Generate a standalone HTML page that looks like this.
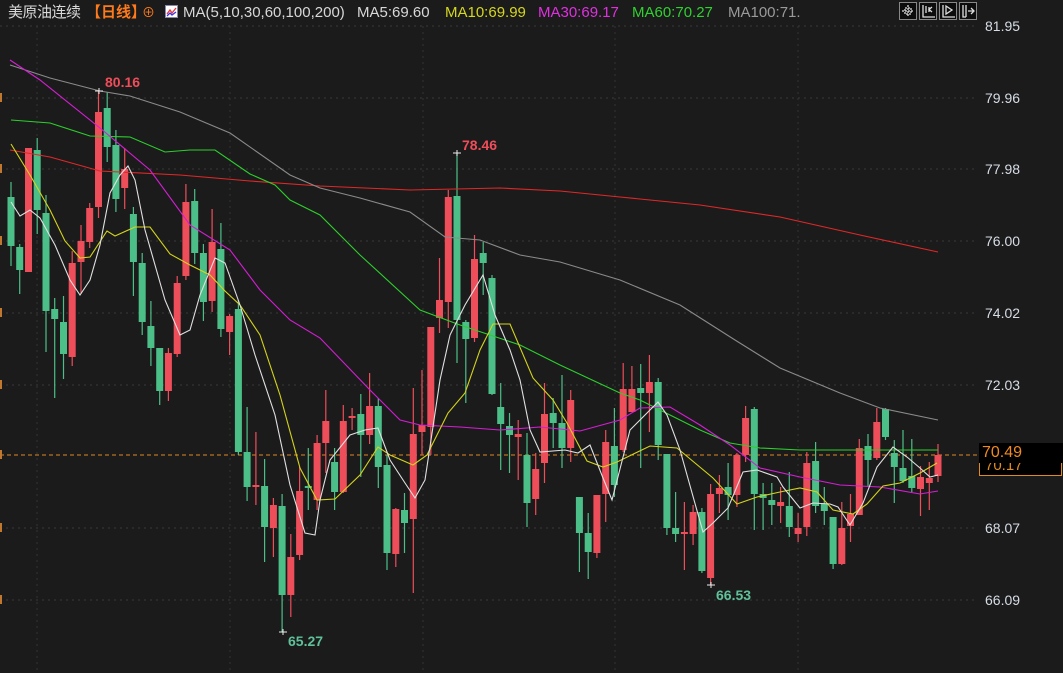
<!DOCTYPE html>
<html><head><meta charset="utf-8">
<style>
html,body{margin:0;padding:0;background:#1b1b1b;width:1063px;height:673px;overflow:hidden}
body{font-family:"Liberation Sans","Noto Sans CJK SC",sans-serif;position:relative}
.h{position:absolute;top:3px;font-size:15px;color:#d8d8d8;white-space:nowrap;line-height:20px}
.ax{position:absolute;left:985px;font-size:14px;color:#d6dde6}
.tb{position:absolute;top:2px;width:18px;height:18px;border:1px solid #888;background:#0c0c0c;box-sizing:border-box}
</style></head><body>
<svg id="c" width="1063" height="673" style="position:absolute;left:0;top:0"></svg>
<div class="h" style="left:8px;letter-spacing:-0.5px">美原油连续</div>
<div class="h" style="left:86px;color:#ff7a1a;font-weight:bold">【日线】</div>
<div class="h" style="left:142px;color:#ff7a1a;font-size:13px">⊕</div>
<div style="position:absolute;left:165px;top:5px;width:13px;height:13px;background:#fff;border:1px solid #88a;box-sizing:border-box"><svg width="11" height="11" style="display:block"><path d="M1 8 L4 4 L6 7 L10 2" stroke="#e33" fill="none" stroke-width="1.3"/><path d="M1 10 L4 7 L6 9 L10 6" stroke="#33e" fill="none" stroke-width="1.3"/></svg></div>
<div class="h" style="left:183px">MA(5,10,30,60,100,200)</div>
<div class="h" style="left:357px">MA5:69.60</div>
<div class="h" style="left:445px;color:#d6d61e">MA10:69.99</div>
<div class="h" style="left:538px;color:#e030e0">MA30:69.17</div>
<div class="h" style="left:632px;color:#30d030">MA60:70.27</div>
<div class="h" style="left:728px;color:#9a9a9a">MA100:71.</div>
<div class="tb" style="left:899px"></div><div class="tb" style="left:919px"></div><div class="tb" style="left:939px"></div><div class="tb" style="left:959px"></div>
<svg width="1063" height="25" style="position:absolute;left:0;top:0"><g stroke="#ddd" stroke-width="1.3" fill="none"><path d="M902 11h12M908 5v12M905 8h6v6h-6z" stroke-dasharray="2,1"/><path d="M923 5v12h12M926 6v7M929 7v5M932 7l-3 2.5 3 2.5"/><path d="M943 5v12h12M946 6l6 4-6 4z"/><path d="M963 5v12h3M966 5v12M968 11h5M971 8l3 3-3 3"/></g></svg>
<div class="ax" style="top:18px">81.95</div>
<div class="ax" style="top:90px">79.96</div>
<div class="ax" style="top:161px">77.98</div>
<div class="ax" style="top:233px">76.00</div>
<div class="ax" style="top:305px">74.02</div>
<div class="ax" style="top:377px">72.03</div>
<div class="ax" style="top:520px">68.07</div>
<div class="ax" style="top:592px">66.09</div>
<div style="position:absolute;left:979px;top:457px;width:83px;height:19px;border:1px solid #e08a20;box-sizing:border-box;background:#000;color:#e08a20;font-size:15px;line-height:15px;padding-left:5px;overflow:hidden">70.17</div>
<div style="position:absolute;left:979px;top:443px;width:84px;height:20px;background:#000;color:#f08a20;font-size:16px;line-height:20px;padding-left:3px;box-sizing:border-box">70.49</div>
<script>
var s=document.getElementById('c'),h='';
[26,98,169,241,313,385,528,600].forEach(function(y){h+='<line x1="0" x2="975" y1="'+y+'" y2="'+y+'" stroke="#3a3a3a" stroke-dasharray="2,4"/>';});
[37,230,423,615,798].forEach(function(x){h+='<line x1="'+x+'" x2="'+x+'" y1="26" y2="673" stroke="#333" stroke-dasharray="2,4"/>';});
h+='<line x1="0" x2="979" y1="455" y2="455" stroke="#e08a20" stroke-dasharray="4,3"/>';
[98,169,241,313,385,455,528,600].forEach(function(y){h+='<rect x="0" y="'+(y-5)+'" width="2" height="9" fill="#c07830"/>';});
var G='#4cbf88',R='#ee4d5a';
var A=[[197,246,182,266,G],[247,270,244,294,G],[148,272,148,272,R],[150,210,138,234,G],[213,311,195,352,G],[309,319,298,398,G],[322,354,296,379,G],[263,357,251,366,R],[241,262,225,294,R],[208,242,203,248,R],[112,207,91,218,R],[108,147,92,162,G],[145,199,130,212,G],[169,188,148,209,R],[214,262,207,296,G],[263,322,253,335,G],[326,348,301,366,G],[348,391,348,405,G],[353,391,348,401,R],[283,354,276,357,R],[202,276,184,280,R],[201,253,189,264,G],[253,302,244,321,G],[242,301,209,312,R],[249,329,223,337,G],[316,332,314,355,R],[309,452,300,455,G],[452,487,407,501,G],[485,487,432,505,R],[486,527,459,562,G],[505,528,498,557,R],[506,595,494,632,G],[557,595,534,617,R],[491,555,467,560,R],[486,488,448,510,G],[443,500,435,510,R],
[421,443,390,473,R],[462,492,448,510,G],[421,492,405,493,R],[416,418,408,430,R],[414,435,394,477,G],[406,435,373,444,R],[406,467,398,488,G],[465,553,455,570,G],[509,554,508,567,R],[510,523,493,553,G],[434,519,388,593,R],[425,432,370,455,R],[327,427,327,455,R],[300,318,258,333,R],[197,302,190,328,R],[196,320,153,363,G],[322,339,320,403,G],[259,338,235,342,R],[253,263,242,295,G],[278,394,275,395,G],[407,424,383,470,G],[426,435,413,473,G],[434,437,420,480,R],[455,503,433,527,G],[469,499,453,515,R],[414,463,383,483,R],[413,423,398,448,G],[423,448,375,468,G],[400,448,390,462,R],[497,533,497,572,G],[533,552,513,579,G],[495,553,495,558,R],[442,494,430,522,R],[446,485,408,497,G],
[389,450,363,452,R],[389,412,366,412,R],[388,393,364,468,G],[382,393,355,432,R],[382,445,378,460,G],[454,528,454,535,G],[528,534,492,542,G],[532,533,502,570,R],[512,534,505,545,R],[512,571,508,573,G],[494,578,484,585,R],[488,494,475,513,R],[487,495,463,520,G],[455,495,453,507,R],[418,455,406,462,R],[409,494,407,530,G],[494,498,483,530,G],[500,505,483,525,G],[502,506,487,523,R],[506,527,472,537,G],[528,534,513,542,R],[463,527,452,536,R],[461,506,442,513,G],[504,511,487,525,G],[517,564,517,569,G],[528,564,502,565,R],[514,526,494,542,R],[448,515,439,515,R],[446,460,434,487,G],[422,458,408,460,R],[409,437,408,440,G],[453,467,440,503,G],[468,481,430,483,G],[476,488,439,492,G],[477,489,466,516,R],[478,483,462,510,R],[455,476,444,482,R]];
var n=A.length,sp=(938-11)/(n-1);
A.forEach(function(c,i){var x=11+i*sp;
h+='<line x1="'+x.toFixed(1)+'" x2="'+x.toFixed(1)+'" y1="'+c[2]+'" y2="'+c[3]+'" stroke="'+c[4]+'" stroke-width="1.2"/>';
var bh=Math.max(c[1]-c[0],2);
h+='<rect x="'+(x-3.5).toFixed(1)+'" y="'+c[0]+'" width="7" height="'+bh+'" fill="'+c[4]+'"/>';});
function pl(p,col){h+='<polyline fill="none" stroke="'+col+'" stroke-width="1.1" points="'+p+'"/>';}
pl('10,150 50,157 100,171 180,175 250,181 320,186 410,190 500,188 560,191 620,197 700,205 780,217 860,235 938,252','#e02828');
pl('10,65 50,78 100,91 130,96 180,112 230,133 290,175 320,188 360,198 410,212 445,237 480,240 520,255 560,262 620,280 680,305 735,340 780,368 840,393 880,408 938,420','#8a8a8a');
pl('11,120 50,123 90,136 130,137 165,152 190,150 215,150 250,174 275,185 290,200 320,215 360,255 420,310 460,325 520,345 560,365 620,393 640,400 700,430 730,443 760,448 800,450 840,450 880,450 938,450','#2ccf2c');
pl('10,60 40,80 100,128 150,170 190,225 230,250 260,290 290,320 320,338 370,390 400,420 420,425 460,427 500,430 540,427 580,431 620,420 640,408 670,407 700,425 730,445 760,468 800,477 840,485 880,487 920,494 938,491','#d61ed6');
pl('11,144 30,175 50,210 65,241 80,258 90,257 107,231 115,236 135,227 150,227 170,254 190,265 210,275 225,291 240,305 260,335 280,395 300,468 317,500 335,499 360,475 378,447 390,455 413,465 427,455 448,413 465,393 480,350 493,324 510,324 533,378 553,400 567,423 587,461 603,467 617,462 650,446 677,448 713,478 737,504 757,497 780,492 800,488 817,492 833,510 853,514 867,504 883,486 900,483 920,473 937,463','#d4d41a');
pl('11,202 20,216 30,210 40,218 55,245 70,280 80,295 90,280 100,245 110,193 120,175 128,166 135,180 145,230 165,300 180,335 190,330 200,295 215,258 225,263 240,305 255,355 275,415 290,485 305,533 315,535 320,500 330,460 350,435 365,430 378,428 390,460 405,483 415,498 425,480 440,380 450,335 465,305 483,275 495,315 510,350 520,380 530,430 540,452 565,450 578,453 590,445 603,478 612,500 630,430 640,420 658,402 667,415 680,450 703,532 713,523 728,508 743,472 757,470 777,477 783,487 800,508 813,503 830,504 838,507 850,525 863,503 877,467 893,447 907,457 920,468 930,477 938,475','#e0e0e0');
function cr(x,y){h+='<path d="M'+(x-4)+' '+y+'h8M'+x+' '+(y-3)+'v6" stroke="#eee" stroke-width="1"/>';}
cr(99,91);cr(457,153);cr(283,632);cr(711,585);
h+='<text x="105" y="87" fill="#ee4d5a" font-size="14" font-weight="bold" font-family="Liberation Sans">80.16</text>';
h+='<text x="462" y="150" fill="#ee4d5a" font-size="14" font-weight="bold" font-family="Liberation Sans">78.46</text>';
h+='<text x="288" y="646" fill="#5fc09a" font-size="14" font-weight="bold" font-family="Liberation Sans">65.27</text>';
h+='<text x="716" y="600" fill="#5fc09a" font-size="14" font-weight="bold" font-family="Liberation Sans">66.53</text>';
s.innerHTML=h;
</script>
</body></html>
